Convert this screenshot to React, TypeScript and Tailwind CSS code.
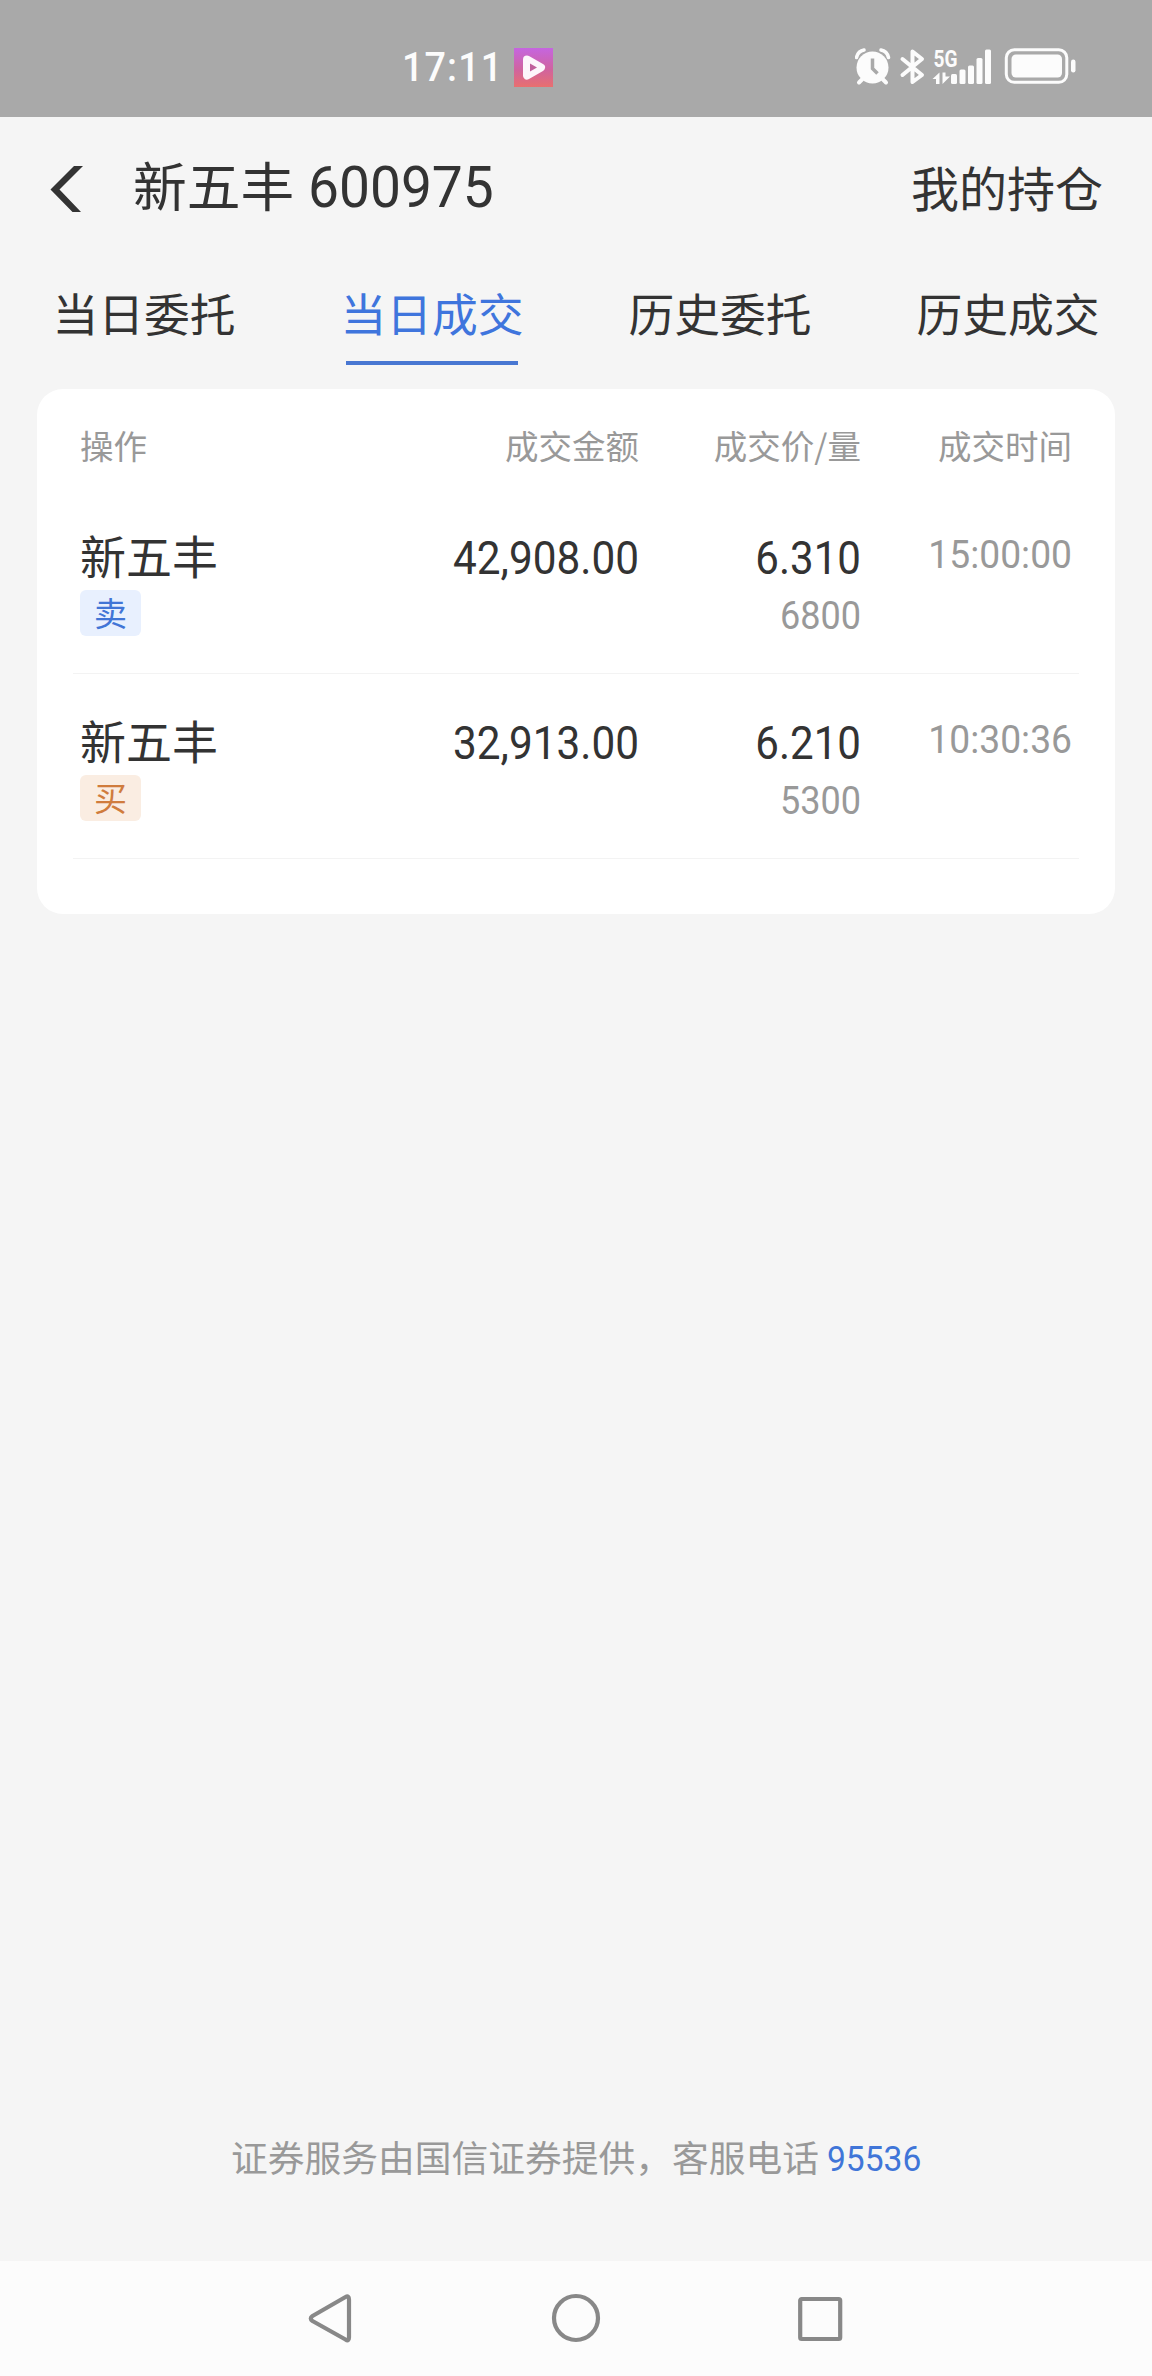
import { useState } from 'react';

const cjk = "font-['Noto_Sans_CJK_SC',sans-serif]";
const num = "font-['Roboto',sans-serif]";

const tabs = ['当日委托', '当日成交', '历史委托', '历史成交'];

const deals = [
  { name: '新五丰', side: '卖', amount: '42,908.00', price: '6.310', volume: '6800', time: '15:00:00' },
  { name: '新五丰', side: '买', amount: '32,913.00', price: '6.210', volume: '5300', time: '10:30:36' },
];

function StatusBar() {
  return (
    <div className="flex h-[117px] items-center bg-[#a9a9a9] pl-[402px] pt-[17px] text-[#fcfcfc]">
      <span className={`${num} w-[112px] origin-left scale-x-[0.92] text-[41px] font-medium leading-[50px] tracking-[1.2px]`}>
        17:11
      </span>
      <svg width="39" height="39" viewBox="0 0 39 39">
        <defs>
          <linearGradient id="video" x1="0" y1="0" x2="0" y2="1">
            <stop offset="0" stopColor="#c565e0" />
            <stop offset="0.55" stopColor="#d0639f" />
            <stop offset="1" stopColor="#e8706f" />
          </linearGradient>
        </defs>
        <rect width="39" height="39" fill="url(#video)" />
        <path d="M13 11.500L27 19.500L13 27.500Z" fill="none" stroke="#fdf6fb" strokeWidth="8" strokeLinejoin="round" />
        <path d="M16 15.500L23 19.500L16 23.500Z" fill="#c0609c" />
      </svg>
      <svg className="ml-[302px]" width="222" height="58" viewBox="0 -10 222 58" fill="none" stroke="currentColor">
        {/* alarm clock */}
        <g>
          <circle cx="17.500" cy="19.500" r="16" fill="currentColor" stroke="none" />
          <path d="M1.500 9.500Q3 3 9 2M26 2Q32 3 33.500 9.500" strokeWidth="3.500" strokeLinecap="round" />
          <path d="M7 31.500L4 34.500M28 31.500L31 34.500" strokeWidth="4" strokeLinecap="round" />
          <path d="M17.500 10.500V20.500L22.500 25.500" stroke="#a9a9a9" strokeWidth="3.500" />
        </g>
        {/* bluetooth */}
        <path
          d="M47.500 11L67 27L57.500 34V3.500L67 11L47.500 27"
          strokeWidth="4"
          strokeLinecap="round"
          strokeLinejoin="round"
        />
        {/* network */}
        <text
          x="78.500"
          y="18.500"
          className={`${num} text-[23px] font-bold`}
          textLength="24"
          lengthAdjust="spacingAndGlyphs"
          fill="currentColor"
          stroke="none"
        >
          5G
        </text>
        <g fill="currentColor" stroke="none">
          <path d="M77.500 31L84.500 24.500V36H81V31ZM87.500 24.500H90.500V28.500H95L87.500 36Z" />
          <rect x="96" y="26" width="6" height="10" rx="1.500" />
          <rect x="104.500" y="21.500" width="6" height="14.500" rx="1.500" />
          <rect x="113" y="17.500" width="6" height="18.500" rx="1.500" />
          <rect x="121.500" y="10" width="6" height="26" rx="1.500" />
          <rect x="130" y="1.500" width="6" height="34.500" rx="1.500" />
        </g>
        {/* battery */}
        <rect x="151.300" y="1.800" width="60.500" height="32.500" rx="8" strokeWidth="3" />
        <rect x="156.500" y="6.500" width="50.500" height="23" rx="4.500" fill="currentColor" stroke="none" />
        <rect x="216" y="11.500" width="4.500" height="13" rx="2.200" fill="currentColor" stroke="none" />
      </svg>
    </div>
  );
}

export default function App() {
  const [active, setActive] = useState(1);

  return (
    <div className={`${cjk} flex min-h-[2376px] w-full flex-col bg-[#f5f5f5] text-[#333333]`}>
      <StatusBar />

      <header className="flex h-[136px] items-center pl-[50px] pr-[49px]">
        <svg className="mt-[8px]" width="33" height="46" viewBox="0 0 33 46" fill="#333333">
          <path d="M24 0H33L9.500 23.500L31 46H22.500L0.500 23.500Z" />
        </svg>
        <h1 className="ml-[50px] flex items-center text-[53.8px] leading-[64px]">
          <span className="-mt-[2px]">新五丰</span>
          <span className={`${num} ml-[14px] mt-[4px] origin-left scale-x-[0.95] text-[58px]`}>600975</span>
        </h1>
        <button className="ml-auto pt-[2px] text-[48px] leading-[64px]">我的持仓</button>
      </header>

      <nav className="flex h-[112px]">
        {tabs.map((tab, i) => (
          <button
            key={tab}
            onClick={() => setActive(i)}
            className="flex flex-1 flex-col items-center justify-end"
          >
            <span className={`text-[45.8px] leading-[64px] ${i === active ? 'text-[#3f75dd]' : ''}`}>{tab}</span>
            <span className={`mt-[17px] h-1 w-[172px] ${i === active ? 'bg-[#4877d2]' : ''}`} />
          </button>
        ))}
      </nav>

      <main className="mx-[37px] mt-6 rounded-[26px] bg-white px-9 pb-[55px]">
        <div className="grid h-[100px] grid-cols-[200px_359px_222px_211px] items-center px-[7px] pt-[12px] text-right text-[33.5px] text-[#999999]">
          <span className="text-left">操作</span>
          <span>成交金额</span>
          <span>成交价/量</span>
          <span>成交时间</span>
        </div>
        {deals.map((deal) => (
          <div
            key={deal.time}
            className="grid h-[185px] grid-cols-[200px_359px_222px_211px] border-b border-[#f3f3f3] px-[7px] pt-[33px] text-right"
          >
            <div className="text-left">
              <div className="text-[46px] leading-[64px]">{deal.name}</div>
              <div
                className={`mt-1 flex h-[46px] w-[61px] justify-center rounded-[6px] text-[33px] leading-[45px] ${
                  deal.side === '卖' ? 'bg-[#e8f0fe] text-[#4175d6]' : 'bg-[#faede2] text-[#d07c3d]'
                }`}
              >
                {deal.side}
              </div>
            </div>
            <div className={`${num} mt-[5px] origin-right scale-x-[0.93] text-[45.5px] leading-[64px]`}>
              {deal.amount}
            </div>
            <div className={`${num} mt-[5px] origin-right scale-x-[0.925]`}>
              <div className="text-[45.5px] leading-[64px]">{deal.price}</div>
              <div className="text-[39px] leading-[50px] text-[#999999]">{deal.volume}</div>
            </div>
            <div className={`${num} mt-px origin-right scale-x-[0.955] text-[39px] leading-[64px] text-[#999999]`}>
              {deal.time}
            </div>
          </div>
        ))}
      </main>

      <footer className="mt-auto flex h-[130px] items-start pl-[231px] text-[36.75px] leading-[50px] text-[#999999]">
        <span>证券服务由国信证券提供，客服电话</span>
        <a className={`${num} ml-[8px] mt-[3px] origin-left scale-x-[0.945] text-[35.5px] text-[#4075d8]`}>95536</a>
      </footer>

      <div className="flex h-[115px] items-center justify-center bg-[#fcfcfc]">
        <svg className="h-[52px] w-[540px]" viewBox="0 0 540 52" fill="none" stroke="#888888" strokeWidth="4.200" strokeLinejoin="round">
          <path d="M39.500 4Q43 2 43 6.500V44.500Q43 49 39.500 46.500L6.500 28Q3 25.500 6.500 23Z" />
          <circle cx="270" cy="25" r="22" />
          <rect x="494.200" y="6" width="40" height="40" rx="1.500" />
        </svg>
      </div>
    </div>
  );
}
